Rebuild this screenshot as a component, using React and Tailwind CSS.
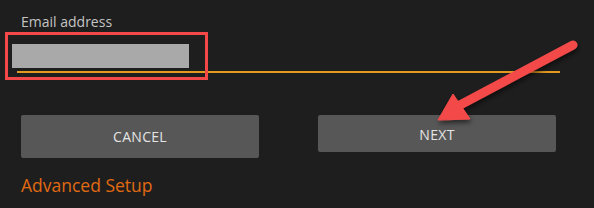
export default function App() {
  return (
    <div className="relative h-[208px] w-[594px] overflow-hidden bg-[#1e1e1e] font-['Open_Sans',sans-serif]">
      <div className="pl-[21px] pt-[12px]">
        <p className="text-[14px] leading-[20px] text-[#c4c4c4]">Email address</p>
        <div className="ml-[-4px] mr-[34px] mt-[39px] h-[2px] bg-[#e39a1e]" />
      </div>

      <div className="mt-[42px] flex items-start gap-[59px] pl-[21px]">
        <button className="flex h-[43px] w-[238px] items-center justify-center rounded-[2px] bg-[#575757] text-[14px] font-medium tracking-[0.3px] text-[#e4e4e4]">
          CANCEL
        </button>
        <button className="flex h-[37px] w-[238px] items-center justify-center rounded-[2px] bg-[#575757] pt-[1px] text-[14px] font-medium tracking-[0.3px] text-[#e4e4e4]">
          NEXT
        </button>
      </div>

      <a className="mt-[15px] block pl-[21px] text-[17.5px] leading-[24px] text-[#e06a12]">Advanced Setup</a>

      {/* redaction block */}
      <div className="absolute left-[12px] top-[44px] h-[24px] w-[177px] bg-[#a9a9a9]" />
      {/* annotation box */}
      <div className="absolute left-[5px] top-[32px] h-[48px] w-[203px] border-[3px] border-[#f24848]" />

      {/* annotation arrow */}
      <svg className="absolute left-0 top-0" width="594" height="208" viewBox="0 0 594 208">
        <defs>
          <filter id="sh" x="-20%" y="-20%" width="140%" height="140%">
            <feDropShadow dx="1" dy="3" stdDeviation="2.5" floodColor="#000" floodOpacity="0.55" />
          </filter>
        </defs>
        <g filter="url(#sh)" fill="#f44a4a" stroke="#f44a4a">
          <line x1="573" y1="45" x2="460" y2="105" strokeWidth="9" strokeLinecap="round" />
          <polygon points="438,120 453,94 470,119" strokeWidth="1" strokeLinejoin="round" />
        </g>
      </svg>
    </div>
  );
}
